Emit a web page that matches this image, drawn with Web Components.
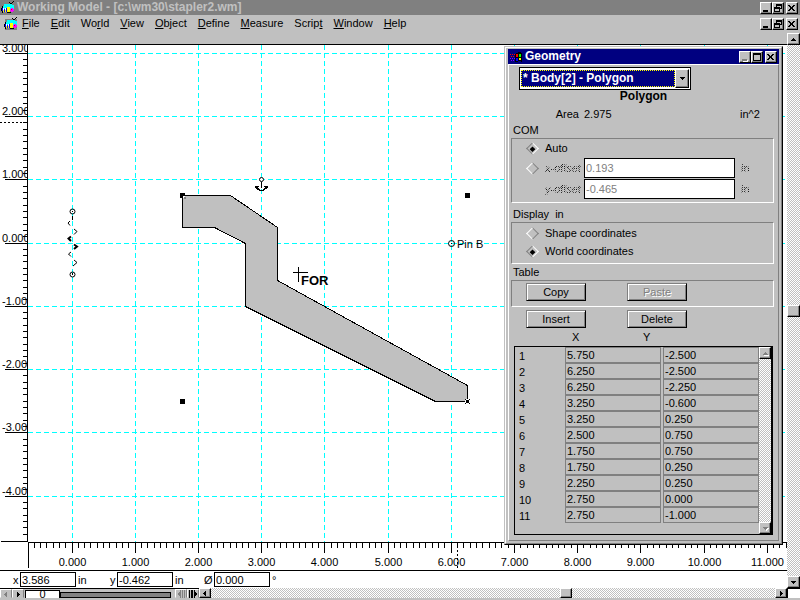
<!DOCTYPE html>
<html lang="en">
<head>
<meta charset="utf-8">
<title>Working Model - [c:\wm30\stapler2.wm]</title>
<style>
html, body {
  height: 100%;
  margin: 0;
}

body {
  --face: #c0c0c0;
  --shade: #808080;
  --navy: #000080;
  --hatch: repeating-conic-gradient(#c0c0c0 0 25%, #fff 0 50%) 0 0 / 2px 2px;
  background: #c0c0c0;
  color: #000;
  font: 11px/16px "Liberation Sans", Arial, sans-serif;
  overflow: hidden;
}
</style>
</head>
<body>
<working-model></working-model>

<script>
const UNIT_X = 63.2;
const UNIT_Y = 63.3;
const ORIGIN = { x: 44, y: 198 };

const VERTICES = [
  [5.75, -2.5], [6.25, -2.5], [6.25, -2.25], [3.25, -0.6],
  [3.25, 0.25], [2.5, 0.75], [1.75, 0.75], [1.75, 0.25],
  [2.25, 0.25], [2.75, 0], [2.75, -1]
];

// world inches to canvas pixels, y pointing up
var toX = x => Math.floor(ORIGIN.x + x * UNIT_X) + .5;
var toY = y => Math.floor(ORIGIN.y - y * UNIT_Y) + .5;

var define = function(name, html, setup) {
  customElements.define(name, class extends HTMLElement {
    constructor() {
      super();
      this.attachShadow({ mode: "open" });
    }
    connectedCallback() {
      this.shadowRoot.innerHTML = html;
      if (setup) setup(this.shadowRoot, this);
    }
  });
};

define("app-icon", `
<style>
:host { display: block; flex: none; width: 14px; height: 14px; }
svg { display: block; }
</style>
<svg width="14" height="14" viewBox="0 0 14 14" shape-rendering="crispEdges" aria-hidden="true">
  <path fill="#808080" d="M1 2h12v11H1z"/>
  <path fill="#0ff" d="M3 3h8v1h2v4H2V5h1z"/>
  <path fill="#000" d="M8 1h1v1H8zM9 2h2v1H9zM12 0h1v1h-1zM11 1h1v1h-1zM1 5h1v2H1zM0 7h1v3H0zM1 10h1v2H1zM6 11h4v1H6z"/>
  <path fill="#00f" d="M1 7h1v3H1zM3 8h1v3H3zM5 7h1v4H5z"/>
  <path fill="#fff" d="M2 7h1v2H2zM4 7h1v2H4z"/>
  <path fill="#ff0" d="M2 9h1v2H2zM4 9h1v2H4zM6 6h3v5H6z"/>
  <path fill="#f0f" d="M10 7h2v1h1v2h-1v1h-2v-1H9V8h1z"/>
  <path fill="#f00" d="M10 8h1v1h-1z"/>
</svg>
`);

define("win-icon", `
<style>
:host { display: block; flex: none; width: 13px; height: 12px; }
svg { display: block; }
</style>
<svg width="13" height="12" viewBox="0 0 13 12" shape-rendering="crispEdges" aria-hidden="true">
  <path fill="#000" d="M5 3h1V2h2V1h3v1h1v9h-1v-1H8v1H5z"/>
  <path fill="#f00" d="M0 3h1v1H0zM2 3h1v1H2zM4 3h1v1H4zM1 5h1v1H1zM3 5h1v1H3zM6 3h2v3H6z"/>
  <path fill="#0f0" d="M9 3h2v3H9z"/>
  <path fill="#80f" d="M0 7h1v1H0zM2 7h1v1H2zM4 7h1v1H4zM1 9h1v1H1zM3 9h1v1H3z"/>
  <path fill="#00f" d="M6 7h2v3H6z"/>
  <path fill="#ff0" d="M9 7h2v2H9z"/>
</svg>
`);

const GLYPHS = {
  min: `<path d="M2 7h5v2H2z"/>`,
  max: `<path fill-rule="evenodd" d="M1 1h8v8H1zM2 3h6v5H2z"/>`,
  restore: `<path fill-rule="evenodd" d="M3 1h6v5H7v3H1V4h2zM4 3v1h3v1h1V3zM2 6h4v2H2z"/>`,
  close: `<path d="M1 2h2v1h1v1h1V3h1V2h2v1H7v1H6v1H5h1v1h1v1h1v1H6V7H5V6H4v1H3v1H1V7h1V6h1V5H3V4H2V3H1z"/>`
};

define("window-buttons", `
<style>
:host { display: flex; flex: none; }
button {
  box-sizing: border-box;
  width: 12px;
  height: 12px;
  padding: 0;
  border: 1px solid;
  border-color: #fff #000 #000 #fff;
  background: var(--face);
  box-shadow: inset -1px -1px var(--shade);
}
button:last-child { margin-left: 2px; }
svg { display: block; fill: #000; }
button:disabled svg { fill: var(--shade); filter: drop-shadow(1px 1px #fff); }
</style>
`, function(root, host) {
  (host.getAttribute("kinds") || "min restore close").split(" ").forEach(function(kind) {
    var button = document.createElement("button");
    button.setAttribute("aria-label", kind);
    button.disabled = kind == "min" && host.hasAttribute("no-min");
    button.innerHTML = `<svg width="10" height="10" viewBox="0 0 10 10" shape-rendering="crispEdges">${GLYPHS[kind]}</svg>`;
    root.append(button);
  });
});

define("title-bar", `
<style>
:host {
  display: flex;
  align-items: center;
  gap: 2px;
  height: 15px;
  padding-right: 2px;
  background: var(--bar, var(--shade));
  color: var(--bar-text, var(--face));
  font: bold 12px/15px "Liberation Sans", Arial, sans-serif;
}
.title { flex: 1; white-space: nowrap; }
</style>
<slot name="icon"></slot>
<span class="title"><slot></slot></span>
<slot name="buttons"></slot>
`);

define("menu-bar", `
<style>
:host { display: flex; align-items: center; height: 18px; padding: 0 2px 0 4px; background: var(--face); }
nav { display: flex; flex: 1; padding-bottom: 2px; }
button {
  border: 0;
  padding: 0 6px 0 5px;
  background: none;
  color: inherit;
  font: inherit;
}
app-icon { margin-right: -1px; }
</style>
<app-icon></app-icon>
<nav>
  <button><u>F</u>ile</button>
  <button><u>E</u>dit</button>
  <button>Wo<u>r</u>ld</button>
  <button><u>V</u>iew</button>
  <button><u>O</u>bject</button>
  <button><u>D</u>efine</button>
  <button><u>M</u>easure</button>
  <button>Scrip<u>t</u></button>
  <button><u>W</u>indow</button>
  <button><u>H</u>elp</button>
</nav>
<window-buttons></window-buttons>
`);

const ARROWS = {
  up: "M4 3h1v1h1v1h1v1H2V5h1V4h1z",
  down: "M2 3h5v1H6v1H5v1H4V5H3V4H2z",
  left: "M5 2v5H4V6H3V5H2V4h1V3h1V2z",
  right: "M3 2h1v1h1v1h1v1H5v1H4v1H3z"
};

var arrow = (way) => `<svg width="9" height="9" viewBox="0 0 9 9" shape-rendering="crispEdges" aria-hidden="true"><path d="${ARROWS[way]}"/></svg>`;

define("scroll-bar", `
<style>
:host { display: flex; flex-direction: column; width: 13px; background: var(--hatch); --before: 1; --after: 1; }
:host([horizontal]) { flex-direction: row; width: auto; height: 10px; }
button, .thumb {
  flex: none;
  box-sizing: border-box;
  width: 100%;
  height: 12px;
  padding: 0;
  border: 1px solid;
  border-color: #fff #000 #000 #fff;
  background: var(--face);
  box-shadow: inset -1px -1px var(--shade);
  display: grid;
  place-items: center;
  overflow: hidden;
}
:host([horizontal]) button, :host([horizontal]) .thumb { width: 12px; height: 100%; }
:host([idle]) svg { fill: var(--shade); filter: drop-shadow(1px 1px #fff); }
.before { flex: var(--before); }
.after { flex: var(--after); }
:host([idle]) .thumb { display: none; }
</style>
`, function(root, host) {
  var ways = host.hasAttribute("horizontal") ? ["left", "right"] : ["up", "down"];
  root.innerHTML += `
    <button aria-label="Scroll ${ways[0]}">${arrow(ways[0])}</button>
    <span class="before"></span><span class="thumb"></span><span class="after"></span>
    <button aria-label="Scroll ${ways[1]}">${arrow(ways[1])}</button>
  `;
});

define("axis-ruler", `
<style>
:host { display: block; overflow: hidden; }
svg { display: block; width: 100%; height: 100%; }
line { stroke: #000; shape-rendering: crispEdges; }
.cursor { stroke-dasharray: 2 2; }
</style>
<svg></svg>
`, function(root, host) {
  var svg = root.querySelector("svg");
  var vertical = host.getAttribute("axis") == "y";
  var out = "";
  var line = (x1, y1, x2, y2, c = "") => out += `<line class="${c}" x1="${x1}" y1="${y1}" x2="${x2}" y2="${y2}"/>`;
  if (vertical) {
    for (var i = -46; i <= 30; i++) {
      var y = toY(i / 10);
      var major = i % 10 == 0;
      line(major ? 5 : 23, y, 27, y);
      if (major) out += `<text x="2" y="${y - 2}">${(i / 10).toFixed(3)}</text>`;
    }
    line(27.5, 0, 27.5, 497);
    line(1, 496.5, 28, 496.5);
    line(0, 77.5, 27, 77.5, "cursor");
  } else {
    for (var i = -6; i <= 117; i++) {
      var x = toX(i / 10);
      var major = i % 10 == 0;
      line(x, 0, x, major ? 11 : 6);
      if (major) out += `<text x="${x}" y="24" text-anchor="middle">${(i / 10).toFixed(3)}</text>`;
    }
    line(0, .5, 4000, .5);
    line(.5, 0, .5, 26);
    line(429.5, 0, 429.5, 26, "cursor");
  }
  svg.innerHTML = out;
});

define("model-canvas", `
<style>
:host { display: block; overflow: hidden; }
svg { display: block; width: 100%; height: 100%; }
.grid { stroke: #0ff; stroke-dasharray: 5 3; shape-rendering: crispEdges; }
.body { fill: #c0c0c0; stroke: #000; shape-rendering: crispEdges; }
.mark { fill: none; stroke: #000; }
.ring { fill: #fff; stroke: #000; }
.crisp { shape-rendering: crispEdges; }
.for { font: bold 13px "Liberation Sans", Arial, sans-serif; }
</style>
<svg></svg>
`, function(root) {
  var out = "";
  for (var i = 0; i <= 30; i++) {
    out += `<line class="grid" x1="${toX(i)}" y1="0" x2="${toX(i)}" y2="497"/>`;
  }
  for (var i = -4; i <= 3; i++) {
    out += `<line class="grid" x1="0" y1="${toY(i)}" x2="4000" y2="${toY(i)}"/>`;
  }
  var points = VERTICES.map(([x, y]) => `${toX(x)},${toY(y)}`).join(" ");
  out += `
    <polygon class="body" points="${points}"/>
    <g class="crisp">
      <path d="M152 148h5v5h-5zM437 148h5v5h-5zM152 354h5v5h-5z"/>
      <path fill="#fff" d="M155 151h2v2h-2zM437 354h5v5h-5z"/>
      <path fill="#808080" d="M156 152h2v2h-2z"/>
      <path d="M438 355h3v3h-3zM437 354h1v1h-1zM441 354h1v1h-1zM437 358h1v1h-1zM441 358h1v1h-1z"/>
      <path class="mark" d="M265 227.5h15M270.5 222v15"/>
    </g>
    <!-- anchor -->
    <circle class="ring" cx="233.5" cy="134.5" r="2"/>
    <path d="M233 137h1v6h-1zM227 141h4v1h-1v1h-1v1h-1v-1h-1zM240 141h-4v1h1v1h1v1h1v-1h1zM229 143h2v1h1v1h3v-1h1v-1h2v1h-1v1h-1v1h-5v-1h-2z"/>
    <!-- spring -->
    <circle class="mark" cx="44.5" cy="166.5" r="2.5"/>
    <circle class="mark" cx="44.5" cy="229.5" r="2.5"/>
    <path class="crisp" d="M44 166h1v1h-1zM44 228h1v2h-1z"/>
    <path class="mark" d="M44.5 171v4M42 176l-2 2 2 2.5M46 184l3 2.5-3 3M43 207l-2.5 2 2.5 2.5M46 215l3 2.5-4 3.5"/>
    <path class="mark" stroke-width="2" d="M43 191.5l-2.5 2 2.5 2.5M46 199.5l3 2-3 2.5"/>
    <!-- pin -->
    <circle class="mark" cx="423.5" cy="198.5" r="3"/>
    <path class="crisp" d="M423 198h1v1h-1z"/>
    <text x="429" y="203">Pin B</text>
    <text class="for" x="273" y="240">FOR</text>
  `;
  root.querySelector("svg").innerHTML = out;
});

define("group-box", `
<style>
:host { display: block; }
.caption { padding-left: 2px; }
.frame {
  border: 1px solid;
  border-color: var(--shade) #fff #fff var(--shade);
}
</style>
<div class="caption"><slot name="caption"></slot></div>
<div class="frame"><slot></slot></div>
`);

define("push-button", `
<style>
:host { display: block; }
button {
  display: block;
  box-sizing: border-box;
  width: 100%;
  height: 18px;
  padding: 0;
  border: 1px solid;
  border-color: var(--shade) #000 #000 var(--shade);
  background: var(--face);
  box-shadow: inset 1px 1px #fff, inset -1px -1px var(--shade);
  color: #000;
  font: inherit;
  line-height: 16px;
}
button:disabled { color: var(--shade); text-shadow: 1px 1px #fff; }
</style>
<button><slot></slot></button>
`, function(root, host) {
  root.querySelector("button").disabled = host.hasAttribute("disabled");
});

define("vertex-table", `
<style>
:host { display: block; }
.heads, tr { display: grid; grid-template-columns: 48px 1fr 1fr; column-gap: 2px; }
.heads { padding: 0 14px 0 1px; line-height: 18px; }
.heads span { padding-left: 7px; }
.heads .y { padding-left: 0; text-indent: -20px; }
.frame {
  display: flex;
  border: 1px solid #000;
  border-right-width: 2px;
}
scroll-bar { width: 12px; }
table { flex: 1; border-spacing: 0; padding-bottom: 11px; display: block; }
tbody { display: block; }
th, td { display: block; box-sizing: border-box; height: 16px; padding: 0; text-align: left; }
th { padding-left: 4px; font-weight: normal; line-height: 18px; }
td {
  border: 1px solid var(--shade);
  padding-left: 1px;
  line-height: 15px;
}
</style>
<div class="heads"><i></i><span>X</span><span class="y">Y</span></div>
<div class="frame">
  <table><tbody></tbody></table>
  <scroll-bar idle></scroll-bar>
</div>
`, function(root) {
  root.querySelector("tbody").innerHTML = VERTICES.map((v, i) => `
    <tr><th scope="row">${i + 1}</th><td>${v[0].toFixed(3)}</td><td>${v[1].toFixed(3)}</td></tr>
  `).join("");
});

define("geometry-panel", `
<style>
:host { display: block; padding: 2px 4px 5px 2px; }
.picker {
  display: flex;
  width: 168px;
  margin-left: 8px;
  padding: 1px;
  border: 1px solid #000;
  background: #fff;
}
select {
  appearance: none;
  flex: 1;
  height: 17px;
  margin: 1px 0;
  padding: 0 0 0 1px;
  border: 1px dotted #ff0;
  border-radius: 0;
  background: var(--navy);
  color: #fff;
  font: bold 12px/15px "Liberation Sans", Arial, sans-serif;
}
.drop {
  display: grid;
  place-items: center;
  width: 12px;
  border: 1px solid;
  border-color: #fff #000 #000 #fff;
  background: var(--face);
  box-shadow: inset -1px -1px var(--shade);
}
h2 { margin: 0 0 2px 2px; text-align: center; font: bold 12px/12px "Liberation Sans", Arial, sans-serif; }
.area { display: grid; grid-template-columns: 68px 1fr 34px; column-gap: 5px; padding: 2px 0 0; }
.area b { font-weight: normal; text-align: right; }
.com { display: grid; grid-template-columns: 33px 39px 1fr 38px; align-items: center; row-gap: 1px; padding: 1px 0 3px; }
.com .auto { grid-column: 2 / -1; line-height: 17px; }
.com .text { grid-column: 2; }
.com label { white-space: nowrap; }
.com .unit { margin-left: 6px; }
.coords { display: grid; grid-template-columns: 33px 1fr; align-items: center; line-height: 18px; padding: 1px 0 3px; }
input[type=text] {
  box-sizing: border-box;
  width: 100%;
  height: 20px;
  padding: 0 1px;
  border: 1px solid #000;
  border-radius: 0;
  background: #fff;
  color: var(--shade);
  font: inherit;
}
input[type=radio] {
  appearance: none;
  box-sizing: border-box;
  width: 9px;
  height: 9px;
  margin: 0 0 0 16px;
  border: 1px solid;
  border-color: var(--shade) var(--shade) #fff #fff;
  transform: rotate(45deg);
  display: grid;
  place-items: center;
}
input[type=radio]:checked { border-color: #fff #fff var(--shade) var(--shade); }
input[type=radio]:checked::before { content: ""; width: 4px; height: 4px; background: #000; }
.off {
  background: repeating-conic-gradient(#000 0 25%, #c0c0c0 0 50%) 0 0 / 2px 2px;
  -webkit-background-clip: text;
  background-clip: text;
  color: transparent;
}
.buttons { display: grid; grid-template-columns: 60px 60px; column-gap: 41px; padding: 2px 0 5px 14px; }
.buttons.second { padding: 3px 0 0 15px; }
vertex-table { margin: 0 1px 0 3px; }
</style>
<div class="picker">
  <select aria-label="Object"><option>* Body[2] - Polygon</option></select>
  <span class="drop">${arrow("down")}</span>
</div>
<h2>Polygon</h2>
<div class="area"><b>Area</b><span>2.975</span><span>in^2</span></div>
<group-box>
  <span slot="caption">COM</span>
  <div class="com">
    <input type="radio" name="com" id="auto" checked><label class="auto" for="auto">Auto</label>
    <input type="radio" name="com" aria-label="Offset" disabled><label class="off" for="xoff">x-offset</label>
    <input type="text" id="xoff" value="0.193" disabled><span class="unit off">in</span>
    <label class="text off" for="yoff">y-offset</label>
    <input type="text" id="yoff" value="-0.465" disabled><span class="unit off">in</span>
  </div>
</group-box>
<group-box style="margin-top: 3px">
  <span slot="caption">Display&nbsp; in</span>
  <div class="coords">
    <input type="radio" name="coords" id="shape"><label for="shape">Shape coordinates</label>
    <input type="radio" name="coords" id="world" checked><label for="world">World coordinates</label>
  </div>
</group-box>
<group-box>
  <span slot="caption">Table</span>
  <div class="buttons"><push-button>Copy</push-button><push-button disabled>Paste</push-button></div>
</group-box>
<div class="buttons second"><push-button>Insert</push-button><push-button>Delete</push-button></div>
<vertex-table></vertex-table>
`);

define("tool-window", `
<style>
:host {
  display: block;
  border: 1px solid;
  border-color: var(--face) #000 #000 var(--face);
  background: var(--face);
}
.edge {
  border: 1px solid;
  border-color: #fff var(--shade) var(--shade) #fff;
  padding: 1px 2px 2px;
}
title-bar { --bar: var(--navy); --bar-text: #fff; padding-left: 2px; }
.client {
  border: 1px solid;
  border-color: #fff var(--shade) var(--shade) #fff;
}
</style>
<div class="edge">
  <title-bar>
    <win-icon slot="icon"></win-icon>
    <slot name="title"></slot>
    <window-buttons slot="buttons" kinds="min max close" no-min></window-buttons>
  </title-bar>
  <div class="client"><slot></slot></div>
</div>
`);

define("coord-bar", `
<style>
:host { display: flex; align-items: center; height: 17px; padding-left: 13px; background: #fff; }
.field { display: grid; grid-template-columns: 7px 58px auto; align-items: center; width: 97px; }
input {
  box-sizing: border-box;
  width: 56px;
  height: 15px;
  padding: 0 1px;
  border: 1px solid #000;
  border-radius: 0;
  background: #fff;
  font: inherit;
}
.turn { grid-template-columns: 10px 58px auto; margin-left: -3px; }
</style>
<div class="field"><label for="x">x</label><input id="x" value="3.586"><span>in</span></div>
<div class="field"><label for="y">y</label><input id="y" value="-0.462"><span>in</span></div>
<div class="field turn"><label for="turn">Ø</label><input id="turn" value="0.000"><span>°</span></div>
`);

define("tape-player", `
<style>
:host { display: flex; width: 199px; box-sizing: border-box; border-top: 1px solid #000; background: var(--face); overflow: hidden; }
button {
  flex: none;
  box-sizing: border-box;
  width: 12px;
  padding: 0;
  border: 1px solid;
  border-color: #fff var(--shade) var(--face) #fff;
  background: var(--face);
  display: grid;
  place-items: center;
}
button:disabled svg { fill: var(--shade); }
.frame {
  box-sizing: border-box;
  width: 35px;
  margin: 1px 0 0 1px;
  border: 1px solid #000;
  border-bottom: 0;
  background: #fff;
  line-height: 7px;
  text-align: center;
}
.bar { flex: 1; height: 4px; margin: 3px 4px 0 0; border: 1px solid #000; background: var(--shade); }
</style>
<button aria-label="Step back" disabled>${arrow("left")}</button>
<button aria-label="Play">${arrow("right")}</button>
<span class="frame">0</span>
<span class="bar"></span>
<button aria-label="Previous frame" disabled>
  <svg width="9" height="8" shape-rendering="crispEdges"><path d="M4 0v8H3V6H2V5H1V3h1V2h1V0zM5 0h1v8H5zM7 0h1v8H7z"/></svg>
</button>
<button aria-label="Next frame">
  <svg width="9" height="8" shape-rendering="crispEdges"><path d="M0 0h1v8H0zM2 0h2v8H2zM5 0h1v2h1v1h1v2H7v1H6v2H5z"/></svg>
</button>
`);

define("working-model", `
<style>
:host { display: flex; flex-direction: column; height: 100vh; }
app-icon[slot] { margin-left: 1px; }
.middle { flex: 1; display: flex; min-height: 0; }
.document { flex: 1; min-width: 0; display: flex; flex-direction: column; }
.strip { height: 11px; border-bottom: 1px solid #000; }
.stage {
  position: relative;
  flex: 1;
  min-height: 0;
  display: grid;
  grid-template: 1fr 28px / 28px 1fr;
  border-bottom: 1px solid #000;
  background: #fff;
}
.stage [axis=y] { grid-row: 1 / -1; }
tool-window { position: absolute; top: 1px; right: 4px; width: 277px; }
.bottom { display: flex; height: 10px; border-bottom: 2px solid var(--face); }
.bottom scroll-bar { flex: 1; --before: 349; --after: 203; }
.corner { box-sizing: border-box; width: 13px; border: 1px solid #000; border-width: 1px 0 0 1px; background: #fff; }
</style>
<title-bar>
  <app-icon slot="icon"></app-icon>
  Working Model - [c:\\wm30\\stapler2.wm]
  <window-buttons slot="buttons"></window-buttons>
</title-bar>
<menu-bar></menu-bar>
<div class="middle">
  <div class="document">
    <div class="strip"></div>
    <div class="stage">
      <axis-ruler axis="y"></axis-ruler>
      <model-canvas></model-canvas>
      <axis-ruler axis="x"></axis-ruler>
      <tool-window>
        <span slot="title">Geometry</span>
        <geometry-panel></geometry-panel>
      </tool-window>
    </div>
    <coord-bar></coord-bar>
  </div>
  <scroll-bar></scroll-bar>
</div>
<div class="bottom">
  <tape-player></tape-player>
  <scroll-bar horizontal></scroll-bar>
  <div class="corner"></div>
</div>
`);
</script>
</body>
</html>
